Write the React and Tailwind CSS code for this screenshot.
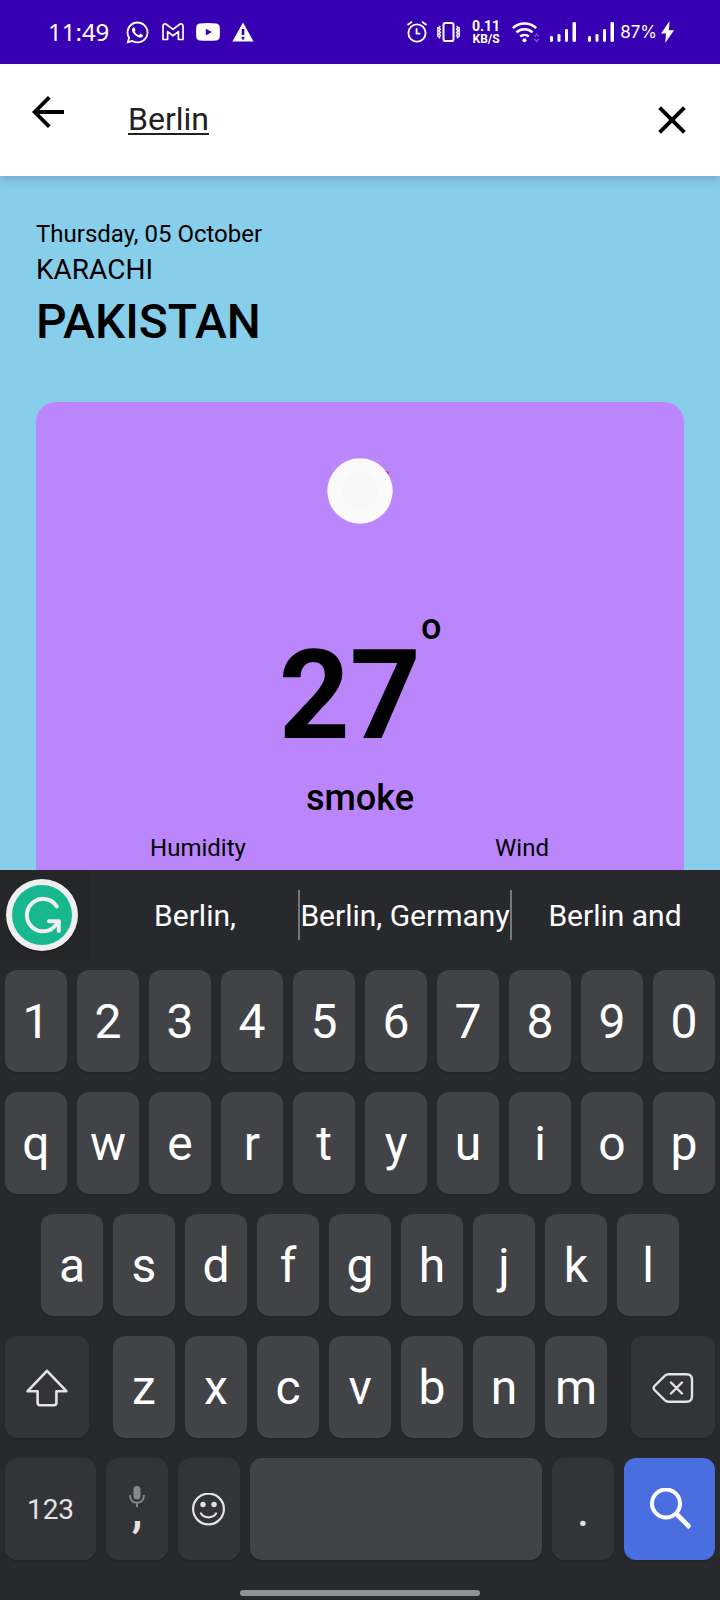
import { useState } from "react";
import { FaWhatsapp } from "react-icons/fa";

function Signal() {
  return (
    <svg width="26" height="20" viewBox="0 0 26 20" fill="#fff" aria-hidden="true">
      <rect x="0" y="14" width="3" height="6" rx="1.4" />
      <rect x="7.5" y="12" width="3" height="8" rx="1.4" />
      <rect x="15" y="7" width="3" height="13" rx="1.4" />
      <rect x="22.5" y="0" width="3.5" height="20" rx="1.4" />
    </svg>
  );
}

function StatusBar() {
  return (
    <div className="flex h-16 items-center justify-between bg-[#3700b3] pl-12 pr-[46px] text-white">
      <div className="flex items-center gap-3">
        <span className="mr-1 font-['Noto_Sans',sans-serif] text-2xl leading-6">11:49</span>
        <FaWhatsapp className="size-[25px]" aria-hidden="true" />
        <svg width="22" height="18" viewBox="0 0 22 18" fill="none" stroke="#fff" strokeWidth="1.7" strokeLinejoin="round" aria-hidden="true">
          <path d="M1 16.5V2.8C1 .8 3.2.4 4.6 1.5L11 6.4l6.4-4.9C18.8.4 21 .8 21 2.8v13.7h-4.6V8.6L11 12.7 5.6 8.6v7.9z" />
        </svg>
        <svg width="24" height="18" viewBox="0 0 24 18" aria-hidden="true">
          <path fill="#fff" fillRule="evenodd" d="M4 .5Q12-.3 20 .5 23.4.8 23.7 4 24.2 9 23.7 14 23.4 17.2 20 17.5 12 18.2 4 17.5.6 17.2.3 14-.2 9 .3 4 .6.8 4 .5zM9.8 5.8v6.6l6-3.3z" />
        </svg>
        <svg width="22" height="20" viewBox="0 0 22 20" aria-hidden="true">
          <path fill="#fff" fillRule="evenodd" d="M11 .5 21.6 19.5H.4zM9.7 7v6h2.6V7zM9.7 14.8v2.6h2.6v-2.6z" />
        </svg>
      </div>
      <div className="flex items-center">
        <svg width="20" height="22" viewBox="0 0 20 22" fill="none" stroke="#fff" strokeWidth="1.9" strokeLinecap="round" aria-hidden="true">
          <circle cx="10" cy="12" r="8.6" />
          <path d="M9.6 8v4.6h3M1.2 3.6 4.2 1.2M18.8 3.6l-3-2.4" />
        </svg>
        <svg className="ml-2.5" width="23" height="20" viewBox="0 0 23 20" fill="none" stroke="#fff" aria-hidden="true">
          <rect x="6.500" y="1" width="10" height="18" rx="1.8" strokeWidth="2" />
          <path strokeWidth="1.4" d="M3.4 4 2 5.6l1.4 1.6L2 8.8l1.4 1.6L2 12l1.4 1.6L2 15.2l1 1.2M.8 5v10M19.6 4 21 5.6l-1.4 1.6L21 8.8l-1.4 1.6L21 12l-1.4 1.6 1.4 1.6-1 1.2M22.2 5v10" />
        </svg>
        <span className="ml-3 flex flex-col items-center font-bold">
          <span className="text-[14px] leading-[14px]">0.11</span>
          <span className="text-[12px] leading-[12px]">KB/S</span>
        </span>
        <svg className="ml-3" width="28" height="21" viewBox="0 0 28 21" fill="none" stroke="#fff" strokeWidth="2.4" aria-hidden="true">
          <path d="M.8 6.2a17 17 0 0 1 23.4 0M4.4 10.4a12 12 0 0 1 16.2 0M8.2 14.5a6.6 6.6 0 0 1 8.6 0" />
          <circle cx="12.5" cy="18.3" r="2" fill="#fff" stroke="none" />
          <path d="m22.5 14.5 2.2-2.4 2.2 2.4M22.5 17l2.2 2.4 2.2-2.4" strokeWidth="1.6" opacity=".3" />
        </svg>
        <span className="ml-2.5 flex gap-3">
          <Signal />
          <Signal />
        </span>
        <span className="ml-1.5 font-['Inter',sans-serif] text-[17px] leading-6">87%</span>
        <svg className="ml-1" width="13" height="22" viewBox="0 0 13 22" aria-hidden="true">
          <path fill="#fff" d="M8.6 0 0 12.6h5L4.2 22 13 9.2H7.8z" />
        </svg>
      </div>
    </div>
  );
}

function SearchHeader() {
  const [query, setQuery] = useState("Berlin");
  return (
    <header className="relative z-10 flex h-28 items-start bg-white shadow-[0_3px_10px_rgba(0,0,0,0.18)]">
      <button type="button" aria-label="Back" className="flex size-24 shrink-0 items-center justify-center">
        <svg width="32" height="32" viewBox="0 0 32 32" fill="none" stroke="#000" strokeWidth="3.8" aria-hidden="true">
          <path d="M32 16H3M17.3 1.3 2.6 16l14.7 14.7" />
        </svg>
      </button>
      <input
        type="text"
        aria-label="Search city"
        value={query}
        onChange={(e) => setQuery(e.target.value)}
        className="ml-8 h-full min-w-0 flex-1 bg-transparent pb-0.5 text-[32px] text-[#212121] underline decoration-2 underline-offset-3 outline-none"
      />
      <button type="button" aria-label="Clear" onClick={() => setQuery("")} className="flex h-full w-24 shrink-0 items-center justify-center">
        <svg width="28" height="28" viewBox="0 0 28 28" fill="none" stroke="#000" strokeWidth="3.8" aria-hidden="true">
          <path d="m1.6 1.6 24.8 24.8M26.4 1.6 1.6 26.4" />
        </svg>
      </button>
    </header>
  );
}

function Weather() {
  return (
    <main className="flex flex-1 flex-col px-9 pt-11 text-black">
      <p className="text-2xl leading-7">Thursday, 05 October</p>
      <p className="mt-1.5 text-[28px] leading-8">KARACHI</p>
      <h1 className="mt-2 text-5xl leading-[56px] font-medium">PAKISTAN</h1>
      <section className="mt-[52px] flex flex-1 flex-col items-center rounded-t-[20px] bg-[#bb86fc] pt-14 pb-2">
        <svg width="66" height="66" viewBox="0 0 66 66" aria-hidden="true">
          <circle cx="60" cy="15" r="1.8" fill="#c2185b" />
          <circle cx="33" cy="33" r="32.700" fill="#fafafa" />
          <circle cx="33" cy="33" r="18.5" fill="#f7f7f7" />
        </svg>
        <p className="mt-[84px] flex items-start">
          <span className="mt-[26px] text-[124px] leading-[124px] font-bold">27</span>
          <span className="text-4xl leading-[38px] font-medium">o</span>
        </p>
        <p className="mt-[22px] text-4xl leading-9 font-medium">smoke</p>
        <div className="mt-[18px] grid w-full grid-cols-2 text-center text-2xl leading-7">
          <span>Humidity</span>
          <span>Wind</span>
        </div>
      </section>
    </main>
  );
}

const keyBase = "flex h-[102px] min-w-0 items-center justify-center rounded-xl shadow-[0_2px_1px_rgba(0,0,0,0.12)]";
const lightKey = `${keyBase} bg-[#424346] pt-0.5 text-5xl leading-[56px] text-white`;
const darkKey = `${keyBase} bg-[#333437] pt-0.5 text-[#e3e3e4]`;

function Letters({ keys }) {
  return keys.split("").map((k) => (
    <button type="button" key={k} className={`${lightKey} flex-1`}>
      {k}
    </button>
  ));
}

function Suggestions() {
  return (
    <div className="flex h-[90px] text-[30px] leading-9 whitespace-nowrap text-white">
      <button type="button" aria-label="Grammarly" className="w-[90px] shrink-0 bg-[#252628]">
        <svg width="90" height="90" viewBox="0 0 90 90" fill="none" aria-hidden="true">
          <circle cx="42" cy="46.5" r="36" fill="#1c1c1e" />
          <circle cx="42" cy="45" r="36" fill="#efefef" />
          <circle cx="42" cy="45" r="30" fill="#17b890" />
          <g stroke="#efefef" strokeWidth="4" strokeLinecap="round" strokeLinejoin="round">
            <path d="M56.8 36.5A16.2 16.2 0 1 0 53.5 57.5L58.5 52" />
            <path d="M49 51.2H58.8V61" />
          </g>
        </svg>
      </button>
      <div className="grid min-w-0 flex-1 grid-cols-3 items-center">
        <button type="button" className="h-[50px] min-w-0 pt-0.5">Berlin,</button>
        <button type="button" className="-mx-0.5 flex h-[50px] min-w-0 items-center justify-center border-x-2 border-[#77787b] pt-0.5">Berlin, Germany</button>
        <button type="button" className="h-[50px] min-w-0 pt-0.5">Berlin and</button>
      </div>
    </div>
  );
}

function Keyboard() {
  return (
    <section aria-label="Keyboard" className="bg-[#28292d] pb-1">
      <Suggestions />
      <div className="flex flex-col gap-5 px-[5px] pt-2.5 pb-[30px]">
        <div className="flex gap-2.5">
          <Letters keys="1234567890" />
        </div>
        <div className="flex gap-2.5">
          <Letters keys="qwertyuiop" />
        </div>
        <div className="flex gap-2.5 px-9">
          <Letters keys="asdfghjkl" />
        </div>
        <div className="flex gap-6">
          <button type="button" aria-label="Shift" className={`${darkKey} flex-[84]`}>
            <svg width="42" height="38" viewBox="0 0 42 38" fill="none" stroke="#e3e3e4" strokeWidth="2.6" strokeLinejoin="round" aria-hidden="true">
              <path d="M21 1.8 1.6 22.2h10v11.6q0 2.4 2.4 2.4h14q2.4 0 2.4-2.4V22.2h10z" />
            </svg>
          </button>
          <div className="flex min-w-0 flex-[494] gap-2.5">
            <Letters keys="zxcvbnm" />
          </div>
          <button type="button" aria-label="Backspace" className={`${darkKey} flex-[84]`}>
            <svg width="42" height="32" viewBox="0 0 42 32" fill="none" stroke="#e3e3e4" strokeWidth="2.4" strokeLinejoin="round" strokeLinecap="round" aria-hidden="true">
              <path d="M16.5 2.2H34.5Q40 2.2 40 7.7V24.3Q40 29.8 34.5 29.8H16.5Q14.5 29.8 13 28.4L2.5 18Q.8 16 2.5 14L13 3.6Q14.5 2.2 16.5 2.2zM19 10.5 30 21.5M30 10.5 19 21.5" />
            </svg>
          </button>
        </div>
        <div className="flex gap-2.5">
          <button type="button" className={`${darkKey} flex-[91] text-[28px] leading-9`}>123</button>
          <button type="button" aria-label="Comma, voice input" className={`${darkKey} relative flex-[62] text-5xl leading-[56px] font-medium`}>
            <svg className="absolute top-7 left-1/2 -translate-x-1/2" width="16" height="22" viewBox="0 0 16 22" fill="none" aria-hidden="true">
              <rect x="4.5" y="0" width="7" height="13.5" rx="3.5" fill="#88898b" />
              <path d="M1.2 9v1.5a6.8 6.3 0 0 0 13.6 0V9M8 17v4" stroke="#88898b" strokeWidth="1.9" />
            </svg>
            ,
          </button>
          <button type="button" aria-label="Emoji" className={`${darkKey} flex-[62]`}>
            <svg width="34" height="34" viewBox="0 0 34 34" fill="none" stroke="#e3e3e4" strokeWidth="2.2" strokeLinecap="round" aria-hidden="true">
              <circle cx="16.5" cy="16" r="15.4" />
              <circle cx="11" cy="11.5" r="2.7" fill="#e3e3e4" stroke="none" />
              <circle cx="22" cy="11.5" r="2.7" fill="#e3e3e4" stroke="none" />
              <path d="M9 20.5Q11.5 24.3 16.5 24.3T24 20.5" />
            </svg>
          </button>
          <button type="button" aria-label="Space" className={`${lightKey} flex-[292]`} />
          <button type="button" className={`${darkKey} flex-[62] text-5xl leading-[56px]`}>.</button>
          <button type="button" aria-label="Search" className={`${keyBase} flex-[91] bg-[#4a6ee0]`}>
            <svg width="42" height="42" viewBox="0 0 42 42" fill="none" stroke="#fff" strokeWidth="4" aria-hidden="true">
              <circle cx="17" cy="15.5" r="14" />
              <path strokeWidth="4.6" d="M27 25.5 41 39.5" />
            </svg>
          </button>
        </div>
      </div>
      <div className="mx-auto h-1.5 w-1/3 rounded-full bg-[#929395]" />
    </section>
  );
}

export default function App() {
  return (
    <div className="flex min-h-screen flex-col bg-[#87ceeb] font-['Roboto',sans-serif]">
      <StatusBar />
      <SearchHeader />
      <Weather />
      <Keyboard />
    </div>
  );
}
